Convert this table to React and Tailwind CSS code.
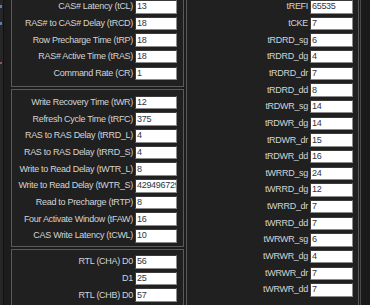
const group1 = [
  ['CAS# Latency (tCL)', '13'],
  ['RAS# to CAS# Delay (tRCD)', '18'],
  ['Row Precharge Time (tRP)', '18'],
  ['RAS# Active Time (tRAS)', '18'],
  ['Command Rate (CR)', '1'],
]

const group2 = [
  ['Write Recovery Time (tWR)', '12'],
  ['Refresh Cycle Time (tRFC)', '375'],
  ['RAS to RAS Delay (tRRD_L)', '4'],
  ['RAS to RAS Delay (tRRD_S)', '4'],
  ['Write to Read Delay (tWTR_L)', '8'],
  ['Write to Read Delay (tWTR_S)', '4294967295'],
  ['Read to Precharge (tRTP)', '8'],
  ['Four Activate Window (tFAW)', '16'],
  ['CAS Write Latency (tCWL)', '10'],
]

const group3 = [
  ['RTL (CHA) D0', '56'],
  ['D1', '25'],
  ['RTL (CHB) D0', '57'],
]

const right = [
  ['tREFI', '65535'],
  ['tCKE', '7'],
  ['tRDRD_sg', '6'],
  ['tRDRD_dg', '4'],
  ['tRDRD_dr', '7'],
  ['tRDRD_dd', '8'],
  ['tRDWR_sg', '14'],
  ['tRDWR_dg', '14'],
  ['tRDWR_dr', '15'],
  ['tRDWR_dd', '16'],
  ['tWRRD_sg', '24'],
  ['tWRRD_dg', '12'],
  ['tWRRD_dr', '7'],
  ['tWRRD_dd', '7'],
  ['tWRWR_sg', '6'],
  ['tWRWR_dg', '4'],
  ['tWRWR_dr', '7'],
  ['tWRWR_dd', '7'],
]

function Row({ label, value, inputW }) {
  return (
    <div className="flex h-[16.67px] items-start justify-end">
      <span className="mr-[2px] flex h-[13.5px] items-center whitespace-nowrap text-[#d4d4d4]">{label}</span>
      <div
        className={`flex h-[13.5px] ${inputW} shrink-0 items-center overflow-hidden whitespace-nowrap border-t border-l border-t-[#3a3a3a] border-l-[#3a3a3a] border-r border-b border-r-[#8c8c8c] border-b-[#8c8c8c] bg-white pl-[1px] text-[#2e3442]`}
      >
        {value}
      </div>
    </div>
  )
}

export default function App() {
  return (
    <div
      className="flex h-[305px] w-[370px] overflow-hidden bg-[#1c1c1c] text-[9px] leading-none tracking-[-0.3px]"
      style={{ fontFamily: '"Liberation Sans", Arial, sans-serif' }}
    >
      {/* cut-off strip on the far left */}
      <div className="flex w-[3px] shrink-0 flex-col bg-[#262626]">
        <div className="mt-[5px] h-[3px] w-[2px] bg-[#5b7fb0]" />
        <div className="mt-[14px] h-[3px] w-[2px] bg-[#5b7fb0]" />
        <div className="mt-[37px] h-[2px] w-[2px] bg-[#8a5a4a]" />
      </div>
      <div className="w-px shrink-0 bg-[#111]" />

      {/* left column */}
      <div className="ml-[7px] flex w-[173px] shrink-0 flex-col">
        <div className="h-[89px] border-x border-b border-[#5a5a5a] bg-[#202020] pr-[6px]">
          {group1.map(([l, v]) => (
            <Row key={l} label={l} value={v} inputW="w-[42px]" />
          ))}
        </div>
        <div className="mt-[2px] h-[160px] border border-[#5a5a5a] bg-[#202020] pr-[6px] pt-[6.3px]">
          {group2.map(([l, v]) => (
            <Row key={l} label={l} value={v} inputW="w-[42px]" />
          ))}
        </div>
        <div className="mt-[2px] flex-1 border-x border-t border-[#5a5a5a] bg-[#202020] pr-[6px] pt-[5.3px]">
          {group3.map(([l, v]) => (
            <Row key={l} label={l} value={v} inputW="w-[42px]" />
          ))}
        </div>
      </div>

      {/* right column */}
      <div className="ml-[2px] flex w-[173px] shrink-0 flex-col border-x border-[#5a5a5a] bg-[#202020] pr-[5px]">
        {right.map(([l, v]) => (
          <Row key={l} label={l} value={v} inputW="w-[43px]" />
        ))}
      </div>
      <div className="ml-px w-px shrink-0 bg-[#4a4a4a]" />
      <div className="flex-1 bg-[#1a1a1a]" />
    </div>
  )
}
